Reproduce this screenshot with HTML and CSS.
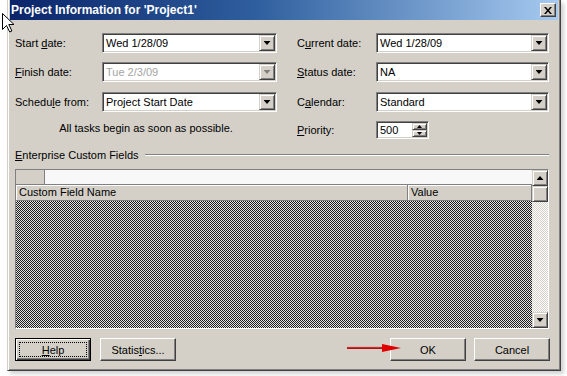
FILE: index.html
```html
<!DOCTYPE html>
<html lang="en">
<head>
    <meta charset="UTF-8">
    <title>Project Information</title>
    <link rel="stylesheet" href="styles.css">
</head>
<body>
<div class="screen">
    <div class="dialog">
        <div class="titlebar">
            <span class="title">Project Information for 'Project1'</span>
            <button class="close">
                <svg width="8" height="7" viewBox="0 0 8 7"><path d="M0 0h2l2 2.5 2-2.5h2l-3 3.5 3 3.5h-2l-2-2.5-2 2.5h-2l3-3.5z" fill="#000"/></svg>
            </button>
        </div>

        <div class="content">
            <div class="fields">
                <label>Start <u>d</u>ate:</label>
                <div class="combo"><span class="value">Wed 1/28/09</span><span class="drop"><i></i></span></div>
                <label class="right">C<u>u</u>rrent date:</label>
                <div class="combo"><span class="value">Wed 1/28/09</span><span class="drop"><i></i></span></div>

                <label><u>F</u>inish date:</label>
                <div class="combo disabled"><span class="value">Tue 2/3/09</span><span class="drop"><i></i></span></div>
                <label class="right"><u>S</u>tatus date:</label>
                <div class="combo"><span class="value">NA</span><span class="drop"><i></i></span></div>

                <label>Schedu<u>l</u>e from:</label>
                <div class="combo"><span class="value">Project Start Date</span><span class="drop"><i></i></span></div>
                <label class="right">C<u>a</u>lendar:</label>
                <div class="combo"><span class="value">Standard</span><span class="drop"><i></i></span></div>

                <div class="note">All tasks begin as soon as possible.</div>
                <label class="right short"><u>P</u>riority:</label>
                <div class="spinner">
                    <span class="value">500</span>
                    <span class="spin">
                        <span class="spin-btn"><i class="up"></i></span>
                        <span class="spin-btn"><i class="down"></i></span>
                    </span>
                </div>
            </div>

            <div class="group">
                <span><u>E</u>nterprise Custom Fields</span>
                <span class="rule"></span>
            </div>

            <div class="table">
                <div class="table-main">
                    <div class="table-top">
                        <span class="corner"></span>
                        <span class="entry"></span>
                    </div>
                    <div class="table-head">
                        <span class="col-name">Custom Field Name</span>
                        <span class="col-value">Value</span>
                    </div>
                    <div class="table-body"></div>
                </div>
                <div class="scrollbar">
                    <span class="sb-btn"><i class="up"></i></span>
                    <span class="sb-btn"></span>
                    <span class="sb-track"></span>
                    <span class="sb-btn"><i class="down"></i></span>
                </div>
            </div>

            <div class="buttons">
                <button class="btn default"><span class="focus"><u>H</u>elp</span></button>
                <button class="btn">Statis<u>t</u>ics...</button>
                <span class="spacer"></span>
                <button class="btn">OK</button>
                <button class="btn">Cancel</button>
            </div>
        </div>
    </div>

    <!-- screenshot annotations -->
    <svg class="pointer" width="14" height="22" viewBox="0 0 14 22">
        <path d="M1.5 1.5v16l4-4 3.2 6.5 2.2-1-3.1-6.5h5.2z" fill="#fff" stroke="#000" stroke-width="1" stroke-linejoin="miter"/>
    </svg>
    <svg class="red-arrow" width="60" height="12" viewBox="0 0 60 12">
        <line x1="3" y1="6" x2="42" y2="6" stroke="#b01010" stroke-width="2"/>
        <line x1="3" y1="5" x2="42" y2="5" stroke="#e88080" stroke-width="0.6"/>
        <path d="M38 2l19 4-19 4z" fill="#e00000"/>
    </svg>
</div>
</body>
</html>
```

FILE: styles.css
```css
/* Classic Windows dialog */
body {
    margin: 0;
    background-color: #fff;
    font-family: 'Liberation Sans', Arial, sans-serif;
    font-size: 11px;
    color: #000;
}

.screen {
    position: relative;
    width: 567px;
    height: 376px;
    overflow: hidden;
}

.dialog {
    box-sizing: border-box;
    width: 554px;
    height: 371px;
    margin-left: 7px;
    padding: 0 2px 2px 2px;
    background-color: #d4d0c8;
    border: 1px solid;
    border-top: none;
    border-color: #d4d0c8 #404040 #404040 #d4d0c8;
    box-shadow: inset 1px 0 #fff, inset -1px -1px #808080, 3px 3px 4px rgba(0, 0, 0, 0.18);
}

.titlebar {
    height: 20px;
    display: flex;
    align-items: center;
    justify-content: space-between;
    padding: 0 2px 0 1px;
    background: linear-gradient(to right, #0a246a 0%, #2f5f9e 45%, #a6caf0 100%);
    color: #fff;
    font-weight: bold;
    font-size: 12px;
}

.close {
    box-sizing: border-box;
    width: 16px;
    height: 14px;
    padding: 0;
    display: flex;
    align-items: center;
    justify-content: center;
    background-color: #d4d0c8;
    border: 1px solid;
    border-color: #fff #404040 #404040 #fff;
    box-shadow: inset -1px -1px #808080;
}

.content {
    padding: 13px 9px 0 5px;
}

/* Form fields */
.fields {
    display: grid;
    grid-template-columns: 87px 175px 20px 79px 173px;
    grid-template-rows: 29px 30px 29px 18px;
    align-items: start;
}

label {
    line-height: 20px;
    white-space: nowrap;
}

label.right {
    grid-column: 4;
}

label.short {
    line-height: 18px;
}

.combo, .spinner {
    box-sizing: border-box;
    height: 20px;
    display: flex;
    align-items: center;
    padding: 1px;
    background-color: #fff;
    border: 1px solid;
    border-color: #808080 #fff #fff #808080;
    box-shadow: inset 1px 1px #404040, inset -1px -1px #d4d0c8;
}

.value {
    flex: 1;
    padding-left: 2px;
    white-space: nowrap;
}

.combo.disabled .value {
    color: #a4a4a4;
}

.drop, .sb-btn, .spin-btn {
    box-sizing: border-box;
    display: flex;
    align-items: center;
    justify-content: center;
    background-color: #d4d0c8;
    border: 1px solid;
    border-color: #d4d0c8 #404040 #404040 #d4d0c8;
    box-shadow: inset 1px 1px #fff, inset -1px -1px #808080;
}

.drop {
    width: 16px;
    height: 16px;
}

.drop i, .down {
    width: 7px;
    height: 4px;
    background-color: #000;
    clip-path: polygon(0 0, 100% 0, 50% 100%);
}

.up {
    width: 7px;
    height: 4px;
    background-color: #000;
    clip-path: polygon(50% 0, 100% 100%, 0 100%);
}

.combo.disabled .drop i {
    background-color: #808080;
}

.note {
    grid-column: 1 / 3;
    text-align: center;
    line-height: 14px;
}

.spinner {
    width: 53px;
    height: 18px;
}

.spin {
    display: flex;
    flex-direction: column;
    width: 15px;
    height: 14px;
}

.spin-btn {
    height: 7px;
}

.spin-btn i {
    width: 5px;
    height: 3px;
}

/* Enterprise custom fields */
.group {
    display: flex;
    align-items: center;
    height: 14px;
    margin-top: 9px;
}

.rule {
    flex: 1;
    margin-left: 6px;
    border-top: 1px solid #808080;
    border-bottom: 1px solid #fff;
}

.table {
    box-sizing: border-box;
    display: flex;
    height: 160px;
    margin-top: 7px;
    border: 1px solid;
    border-color: #808080 #fff #fff #808080;
}

.table-main {
    flex: 1;
    display: flex;
    flex-direction: column;
}

.table-top {
    display: flex;
    height: 15px;
}

.corner {
    width: 28px;
    background-color: #d4d0c8;
    border-right: 1px solid #808080;
    border-bottom: 1px solid #808080;
}

.entry {
    flex: 1;
    background-color: #f8f8f8;
    border-bottom: 1px solid #808080;
}

.table-head {
    display: flex;
    height: 16px;
    line-height: 15px;
}

.col-name, .col-value {
    box-sizing: border-box;
    padding-left: 3px;
    background-color: #d4d0c8;
    border-right: 1px solid #808080;
    border-bottom: 1px solid #808080;
    box-shadow: inset 1px 1px #fff;
}

.col-name {
    width: 392px;
}

.col-value {
    flex: 1;
}

.table-body {
    flex: 1;
    background-image: repeating-conic-gradient(#1a1a1a 0% 25%, #e4e4e4 0% 50%);
    background-size: 2px 2px;
}

.scrollbar {
    width: 16px;
    display: flex;
    flex-direction: column;
}

.sb-btn {
    height: 16px;
}

.sb-track {
    flex: 1;
    background-image: repeating-conic-gradient(#fff 0% 25%, #d4d0c8 0% 50%);
    background-size: 2px 2px;
}

/* Bottom buttons */
.buttons {
    display: flex;
    margin-top: 9px;
    margin-right: -1px;
}

.btn {
    box-sizing: border-box;
    width: 76px;
    height: 23px;
    padding: 0;
    font: inherit;
    color: #000;
    background-color: #d4d0c8;
    border: 1px solid;
    border-color: #fff #404040 #404040 #fff;
    box-shadow: inset -1px -1px #808080;
    margin-right: 8px;
}

.btn:last-child {
    margin-right: 0;
}

.btn.default {
    border-color: #000;
    box-shadow: inset 1px 1px #fff, inset -1px -1px #404040, inset -2px -2px #808080;
    margin-right: 9px;
    display: flex;
    padding: 3px;
}

.focus {
    flex: 1;
    display: flex;
    align-items: center;
    justify-content: center;
    border: 1px dotted #000;
}

.spacer {
    flex: 1;
}

/* Screenshot overlays */
.pointer {
    position: absolute;
    left: 1px;
    top: 12px;
}

.red-arrow {
    position: absolute;
    left: 344px;
    top: 342px;
}
```
